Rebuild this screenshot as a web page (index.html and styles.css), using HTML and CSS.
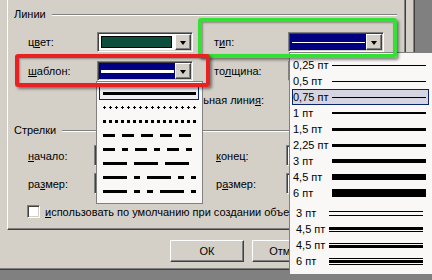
FILE: index.html
```html
<!DOCTYPE html>
<html lang="ru">
<head>
    <meta charset="UTF-8">
    <title>Формат автофигуры</title>
    <link rel="stylesheet" href="styles.css">
</head>
<body>

<div class="screen">
    <div class="dialog">
        <div class="page">
            <div class="group-title"><span>Линии</span></div>
            <div class="lines-grid">
                <span class="label">ц<u>в</u>ет:</span>
                <div class="combo">
                    <div class="value pad"><div class="swatch"></div></div>
                    <div class="drop"></div>
                </div>
                <span class="label">т<u>и</u>п:</span>
                <div class="combo">
                    <div class="value picked"><i class="thin-line"></i></div>
                    <div class="drop"></div>
                </div>

                <span class="label"><u>ш</u>аблон:</span>
                <div class="combo">
                    <div class="value picked"><i class="thick-line"></i></div>
                    <div class="drop"></div>
                </div>
                <span class="label">то<u>л</u>щина:</span>
                <div class="combo">
                    <div class="value pad"></div>
                    <div class="drop"></div>
                </div>

                <span class="label wide">соединительная лини<u>я</u>:</span>
            </div>

            <div class="group-title arrows-title"><span>Стрелки</span></div>
            <div class="arrows-grid">
                <span class="label"><u>н</u>ачало:</span>
                <div class="combo"><div class="value pad"></div><div class="drop"></div></div>
                <span class="label"><u>к</u>онец:</span>
                <div class="combo"><div class="value pad"></div><div class="drop"></div></div>

                <span class="label">ра<u>з</u>мер:</span>
                <div class="combo"><div class="value pad"></div><div class="drop"></div></div>
                <span class="label">р<u>а</u>змер:</span>
                <div class="combo"><div class="value pad"></div><div class="drop"></div></div>
            </div>

            <label class="check">
                <span class="box"></span>
                <span class="check-text"><u>и</u>спользовать по умолчанию при создании объектов</span>
            </label>
        </div>

        <div class="buttons">
            <button class="btn">ОК</button>
            <button class="btn">Отмена</button>
        </div>
    </div>

    <!-- dropdown with dash patterns -->
    <div class="dash-list">
        <div class="dash-item selected"><i class="dash solid"></i></div>
        <div class="dash-item"><i class="dash plus"></i></div>
        <div class="dash-item"><i class="dash square"></i></div>
        <div class="dash-item"><i class="dash short"></i></div>
        <div class="dash-item"><i class="dash short-dot"></i></div>
        <div class="dash-item"><i class="dash long"></i></div>
        <div class="dash-item"><i class="dash long-dot"></i></div>
        <div class="dash-item"><i class="dash long-dot-dot"></i></div>
    </div>

    <!-- dropdown with line weights -->
    <div class="weight-list">
        <div class="w-item"><span class="w-label">0,25 пт</span><i class="w-line" style="height:1px"></i></div>
        <div class="w-item"><span class="w-label">0,5 пт</span><i class="w-line" style="height:1px"></i></div>
        <div class="w-item selected"><span class="w-label">0,75 пт</span><i class="w-line" style="height:1px"></i></div>
        <div class="w-item"><span class="w-label">1 пт</span><i class="w-line" style="height:2px"></i></div>
        <div class="w-item"><span class="w-label">1,5 пт</span><i class="w-line" style="height:3px"></i></div>
        <div class="w-item"><span class="w-label">2,25 пт</span><i class="w-line" style="height:3px"></i></div>
        <div class="w-item"><span class="w-label">3 пт</span><i class="w-line" style="height:4px"></i></div>
        <div class="w-item"><span class="w-label">4,5 пт</span><i class="w-line" style="height:6px"></i></div>
        <div class="w-item"><span class="w-label">6 пт</span><i class="w-line" style="height:8px"></i></div>
        <div class="w-item double first-double"><span class="w-label">3 пт</span><i class="w-line dbl-thin"></i></div>
        <div class="w-item double"><span class="w-label">4,5 пт</span><i class="w-line dbl-thick-thin"></i></div>
        <div class="w-item double"><span class="w-label">4,5 пт</span><i class="w-line dbl-thin-thick"></i></div>
        <div class="w-item double"><span class="w-label">6 пт</span><i class="w-line triple"></i></div>
    </div>

    <div class="mark mark-green"></div>
    <div class="mark mark-red"></div>
</div>

</body>
</html>
```

FILE: styles.css
```css
* {
    box-sizing: border-box;
}
body {
    margin: 0;
    font-family: "Liberation Sans", Tahoma, sans-serif;
    font-size: 11px;
    color: #000;
    background: #808080;
}
u {
    text-decoration: underline;
    text-underline-offset: 1px;
}
.screen {
    position: relative;
    width: 432px;
    height: 280px;
    overflow: hidden;
    background: #808080;
}
.dialog {
    width: 415px;
    height: 270px;
    background: #d4d0c8;
    border-right: 1px solid #404040;
    border-bottom: 1px solid #404040;
    box-shadow: inset -1px -1px 0 #808080;
}

/* tab page */
.page {
    margin-left: 7px;
    width: 399px;
    height: 230px;
    border-left: 1px solid #fff;
    border-right: 1px solid #404040;
    border-bottom: 1px solid #404040;
    box-shadow: inset -1px -1px 0 #808080;
    padding: 8px 0 0 6px;
}
.group-title {
    display: flex;
    align-items: center;
    height: 13px;
    line-height: 13px;
    margin-right: 8px;
}
.group-title::after {
    content: "";
    flex: 1;
    margin-left: 6px;
    border-top: 1px solid #808080;
    border-bottom: 1px solid #fff;
}
.lines-grid {
    display: grid;
    grid-template-columns: 69px 96px 21px 74px 96px;
    grid-template-rows: 20px 20px 20px;
    row-gap: 9px;
    margin: 11px 0 0 14px;
    align-items: center;
}
.lines-grid .label:nth-of-type(2),
.lines-grid .label:nth-of-type(4) {
    grid-column: 4;
}
.label {
    white-space: nowrap;
}
.label.wide {
    grid-column: 1 / 5;
    text-align: right;
    padding-right: 24px;
}
.arrows-title {
    margin-top: 14px;
}
.arrows-grid {
    display: grid;
    grid-template-columns: 66px 96px 26px 70px 96px;
    grid-template-rows: 21px 21px;
    row-gap: 7px;
    margin: 8px 0 0 14px;
    align-items: center;
}
.arrows-grid .label:nth-of-type(2),
.arrows-grid .label:nth-of-type(4) {
    grid-column: 4;
}

/* combo boxes */
.combo {
    display: flex;
    height: 100%;
    background: #fff;
    border: 1px solid;
    border-color: #808080 #fff #fff #808080;
    box-shadow: inset 1px 1px 0 #404040, inset -1px -1px 0 #d4d0c8;
    padding: 1px;
}
.combo .value {
    flex: 1;
    display: flex;
    align-items: center;
}
.combo .value.pad {
    padding: 2px 3px 2px 2px;
}
.combo .value.picked {
    background: #000080;
    padding: 0 1px 0 2px;
}
.swatch {
    width: 100%;
    height: 100%;
    background: #0b4f3c;
    border: 1px solid #000;
}
.thin-line {
    display: block;
    width: 100%;
    height: 1px;
    background: #fff;
}
.thick-line {
    display: block;
    width: 100%;
    height: 3px;
    background: #fff;
}
.drop {
    position: relative;
    width: 16px;
    background: #d4d0c8;
    border: 1px solid;
    border-color: #fff #404040 #404040 #fff;
    box-shadow: inset -1px -1px 0 #808080;
}
.drop::after {
    content: "";
    position: absolute;
    left: 4px;
    top: 6px;
    border-left: 3px solid transparent;
    border-right: 3px solid transparent;
    border-top: 4px solid #000;
}

/* checkbox; the tail of the label lies under the open list */
.check {
    display: flex;
    align-items: center;
    gap: 5px;
    width: 262px;
    margin: 11px 0 0 13px;
    white-space: nowrap;
    overflow: hidden;
}
.check .box {
    flex: none;
    width: 13px;
    height: 13px;
    background: #fff;
    border: 1px solid;
    border-color: #808080 #fff #fff #808080;
    box-shadow: inset 1px 1px 0 #404040, inset -1px -1px 0 #d4d0c8;
}
.check-text {
    overflow: hidden;
}

/* dialog buttons, cut where the list covers them */
.buttons {
    display: flex;
    gap: 8px;
    width: 119px;
    margin: 10px 0 0 170px;
    overflow: hidden;
}
.btn {
    flex: none;
    width: 74px;
    height: 22px;
    font: inherit;
    color: #000;
    background: #d4d0c8;
    border: 1px solid;
    border-color: #fff #404040 #404040 #fff;
    box-shadow: inset -1px -1px 0 #808080;
    padding: 0;
}

/* dash dropdown */
.dash-list {
    position: absolute;
    left: 96px;
    top: 81px;
    width: 107px;
    height: 123px;
    background: #f9f8f6;
    border: 1px solid #808080;
    padding: 4px 3px 0 2px;
}
.dash-item {
    display: flex;
    align-items: center;
    height: 14px;
    border: 1px solid transparent;
    padding: 0 2px 0 3px;
}
.dash-item.selected {
    border-color: #0a246a;
    background: #efeff4;
}
.dash {
    display: block;
    width: 100%;
    height: 3px;
}
.dash.solid {
    background: #000;
}
.dash.plus {
    background:
        repeating-linear-gradient(90deg, #000 0 3px, transparent 3px 6px) 0 1px / 100% 1px no-repeat,
        repeating-linear-gradient(90deg, transparent 0 1px, #000 1px 2px, transparent 2px 6px);
}
.dash.square {
    background: repeating-linear-gradient(90deg, #000 0 3px, transparent 3px 6px);
}
.dash.short {
    background: repeating-linear-gradient(90deg, #000 0 12px, transparent 12px 19px);
}
.dash.short-dot {
    background: repeating-linear-gradient(90deg, #000 0 12px, transparent 12px 19px, #000 19px 25px, transparent 25px 32px);
}
.dash.long {
    background: repeating-linear-gradient(90deg, #000 0 24px, transparent 24px 31px);
}
.dash.long-dot {
    background: repeating-linear-gradient(90deg, #000 0 24px, transparent 24px 31px, #000 31px 37px, transparent 37px 44px);
}
.dash.long-dot-dot {
    background: repeating-linear-gradient(90deg, #000 0 24px, transparent 24px 31px, #000 31px 37px, transparent 37px 44px, #000 44px 50px, transparent 50px 57px);
}

/* weight dropdown */
.weight-list {
    position: absolute;
    left: 289px;
    top: 52px;
    width: 144px;
    height: 223px;
    background: #f9f8f6;
    border: 1px solid #808080;
    padding: 4px 3px 0 2px;
}
.w-item {
    display: flex;
    align-items: center;
    height: 16px;
    border: 1px solid transparent;
    border-left: 0;
    padding: 0 2px 0 1px;
    white-space: nowrap;
}
.w-item.selected {
    border: 1px solid #0a246a;
    padding-left: 0;
    background: #d5d5e1;
}
.w-label {
    width: 39px;
    flex: none;
}
.w-line {
    display: block;
    flex: 1;
    background: #000;
}
.w-item.double {
    padding: 0 5px 0 4px;
}
.w-item.first-double {
    margin-top: 4px;
}
.w-item.double .w-label {
    width: 33px;
}
.dbl-thin {
    height: 5px;
    background: linear-gradient(#000 0 1px, transparent 1px 4px, #000 4px 5px);
}
.dbl-thick-thin {
    height: 5px;
    background: linear-gradient(#000 0 3px, transparent 3px 4px, #000 4px 5px);
}
.dbl-thin-thick {
    height: 5px;
    background: linear-gradient(#000 0 1px, transparent 1px 2px, #000 2px 5px);
}
.triple {
    height: 7px;
    background: linear-gradient(#000 0 1px, transparent 1px 2px, #000 2px 5px, transparent 5px 6px, #000 6px 7px);
}

/* highlight frames drawn over the screenshot */
.mark {
    position: absolute;
    border-radius: 3px;
    box-shadow: 2px 2px 3px rgba(0, 0, 0, 0.45), inset 1px 1px 2px rgba(0, 0, 0, 0.35);
}
.mark-green {
    left: 198px;
    top: 18px;
    width: 199px;
    height: 40px;
    border: 4px solid #33e033;
}
.mark-red {
    left: 15px;
    top: 54px;
    width: 195px;
    height: 33px;
    border: 4px solid #e82222;
}
```
